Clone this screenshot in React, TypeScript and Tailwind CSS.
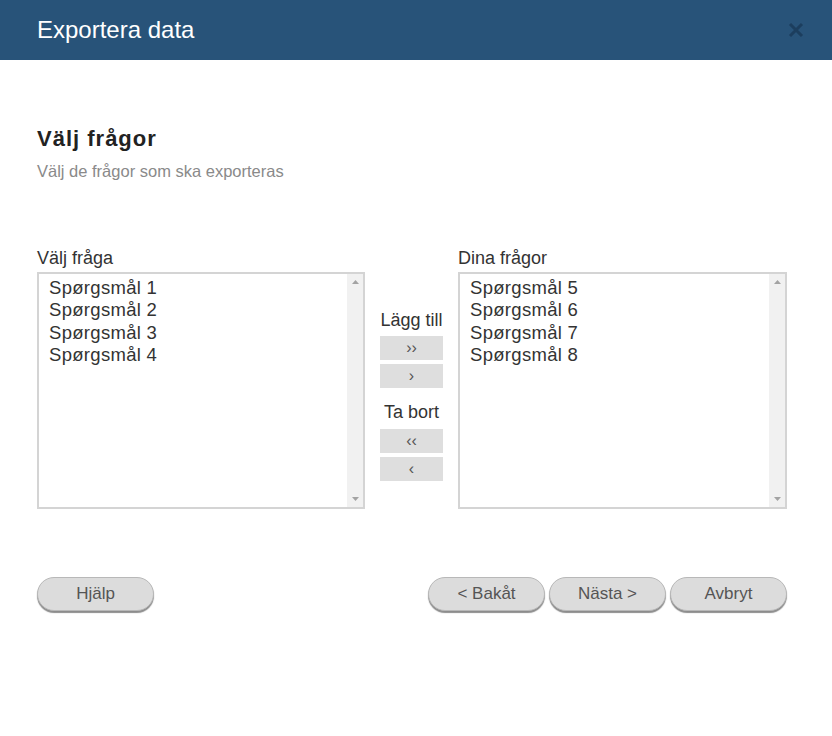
const leftItems = ['Spørgsmål 1', 'Spørgsmål 2', 'Spørgsmål 3', 'Spørgsmål 4'];
const rightItems = ['Spørgsmål 5', 'Spørgsmål 6', 'Spørgsmål 7', 'Spørgsmål 8'];

function ListBox({ items }: { items: string[] }) {
  return (
    <div className="flex h-[237px] border-2 border-[#d4d4d4] bg-white">
      <ul className="flex-1 pl-[10px] pt-[3px]">
        {items.map((item) => (
          <li key={item} className="text-[18.5px] leading-[22.4px] tracking-[0.3px] text-[#333]">
            {item}
          </li>
        ))}
      </ul>
      {/* fake scrollbar */}
      <div className="flex w-[16px] flex-col items-center justify-between bg-[#f1f1f1] py-[6px]">
        <svg width="7" height="4" viewBox="0 0 7 4">
          <path d="M0 4 L3.5 0 L7 4 Z" fill="#a3a3a3" />
        </svg>
        <svg width="7" height="4" viewBox="0 0 7 4">
          <path d="M0 0 L3.5 4 L7 0 Z" fill="#a3a3a3" />
        </svg>
      </div>
    </div>
  );
}

function MoveButton({ label }: { label: string }) {
  return (
    <button className="flex h-[24px] w-[63px] items-center justify-center bg-[#dedede] text-[16px] text-[#555]">
      {label}
    </button>
  );
}

function PillButton({ label }: { label: string }) {
  return (
    <button className="h-[34px] w-[117px] rounded-full border border-[#b8b8b8] bg-[#dcdcdc] text-[17px] text-[#555] shadow-[0_2px_1px_rgba(0,0,0,0.45)]">
      {label}
    </button>
  );
}

export default function App() {
  return (
    <div className="min-h-[736px] w-[832px] bg-white font-['Liberation_Sans',Arial,sans-serif]">
      {/* Header */}
      <div className="flex h-[60px] items-center justify-between bg-[#285379] pl-[37px] pr-[28px]">
        <h1 className="text-[24px] text-white">Exportera data</h1>
        <svg width="16" height="16" viewBox="0 0 16 16">
          <path d="M2 2 L14 14 M14 2 L2 14" stroke="#1c3e5e" strokeWidth="3" strokeLinecap="butt" />
        </svg>
      </div>

      <div className="pl-[37px] pr-[45px]">
        <h2 className="mt-[66px] text-[22px] font-bold leading-[26px] tracking-[1px] text-[#222]">
          Välj frågor
        </h2>
        <p className="mt-[10px] text-[16.5px] leading-[18px] text-[#8a8a8a]">
          Välj de frågor som ska exporteras
        </p>

        <div className="mt-[68px] grid grid-cols-[328px_93px_1fr]">
          <div>
            <div className="mb-[4px] text-[18px] leading-[20px] text-[#333]">Välj fråga</div>
            <ListBox items={leftItems} />
          </div>

          <div className="flex flex-col items-center pt-[62px]">
            <div className="mb-[6px] text-[18px] leading-[20px] text-[#333]">Lägg till</div>
            <div className="flex flex-col gap-[4px]">
              <MoveButton label="››" />
              <MoveButton label="›" />
            </div>
            <div className="mb-[7px] mt-[14px] text-[18px] leading-[20px] text-[#333]">Ta bort</div>
            <div className="flex flex-col gap-[4px]">
              <MoveButton label="‹‹" />
              <MoveButton label="‹" />
            </div>
          </div>

          <div>
            <div className="mb-[4px] text-[18px] leading-[20px] text-[#333]">Dina frågor</div>
            <ListBox items={rightItems} />
          </div>
        </div>

        <div className="mt-[68px] flex items-start justify-between">
          <PillButton label="Hjälp" />
          <div className="flex gap-[4px]">
            <PillButton label="< Bakåt" />
            <PillButton label="Nästa >" />
            <PillButton label="Avbryt" />
          </div>
        </div>
      </div>
    </div>
  );
}
